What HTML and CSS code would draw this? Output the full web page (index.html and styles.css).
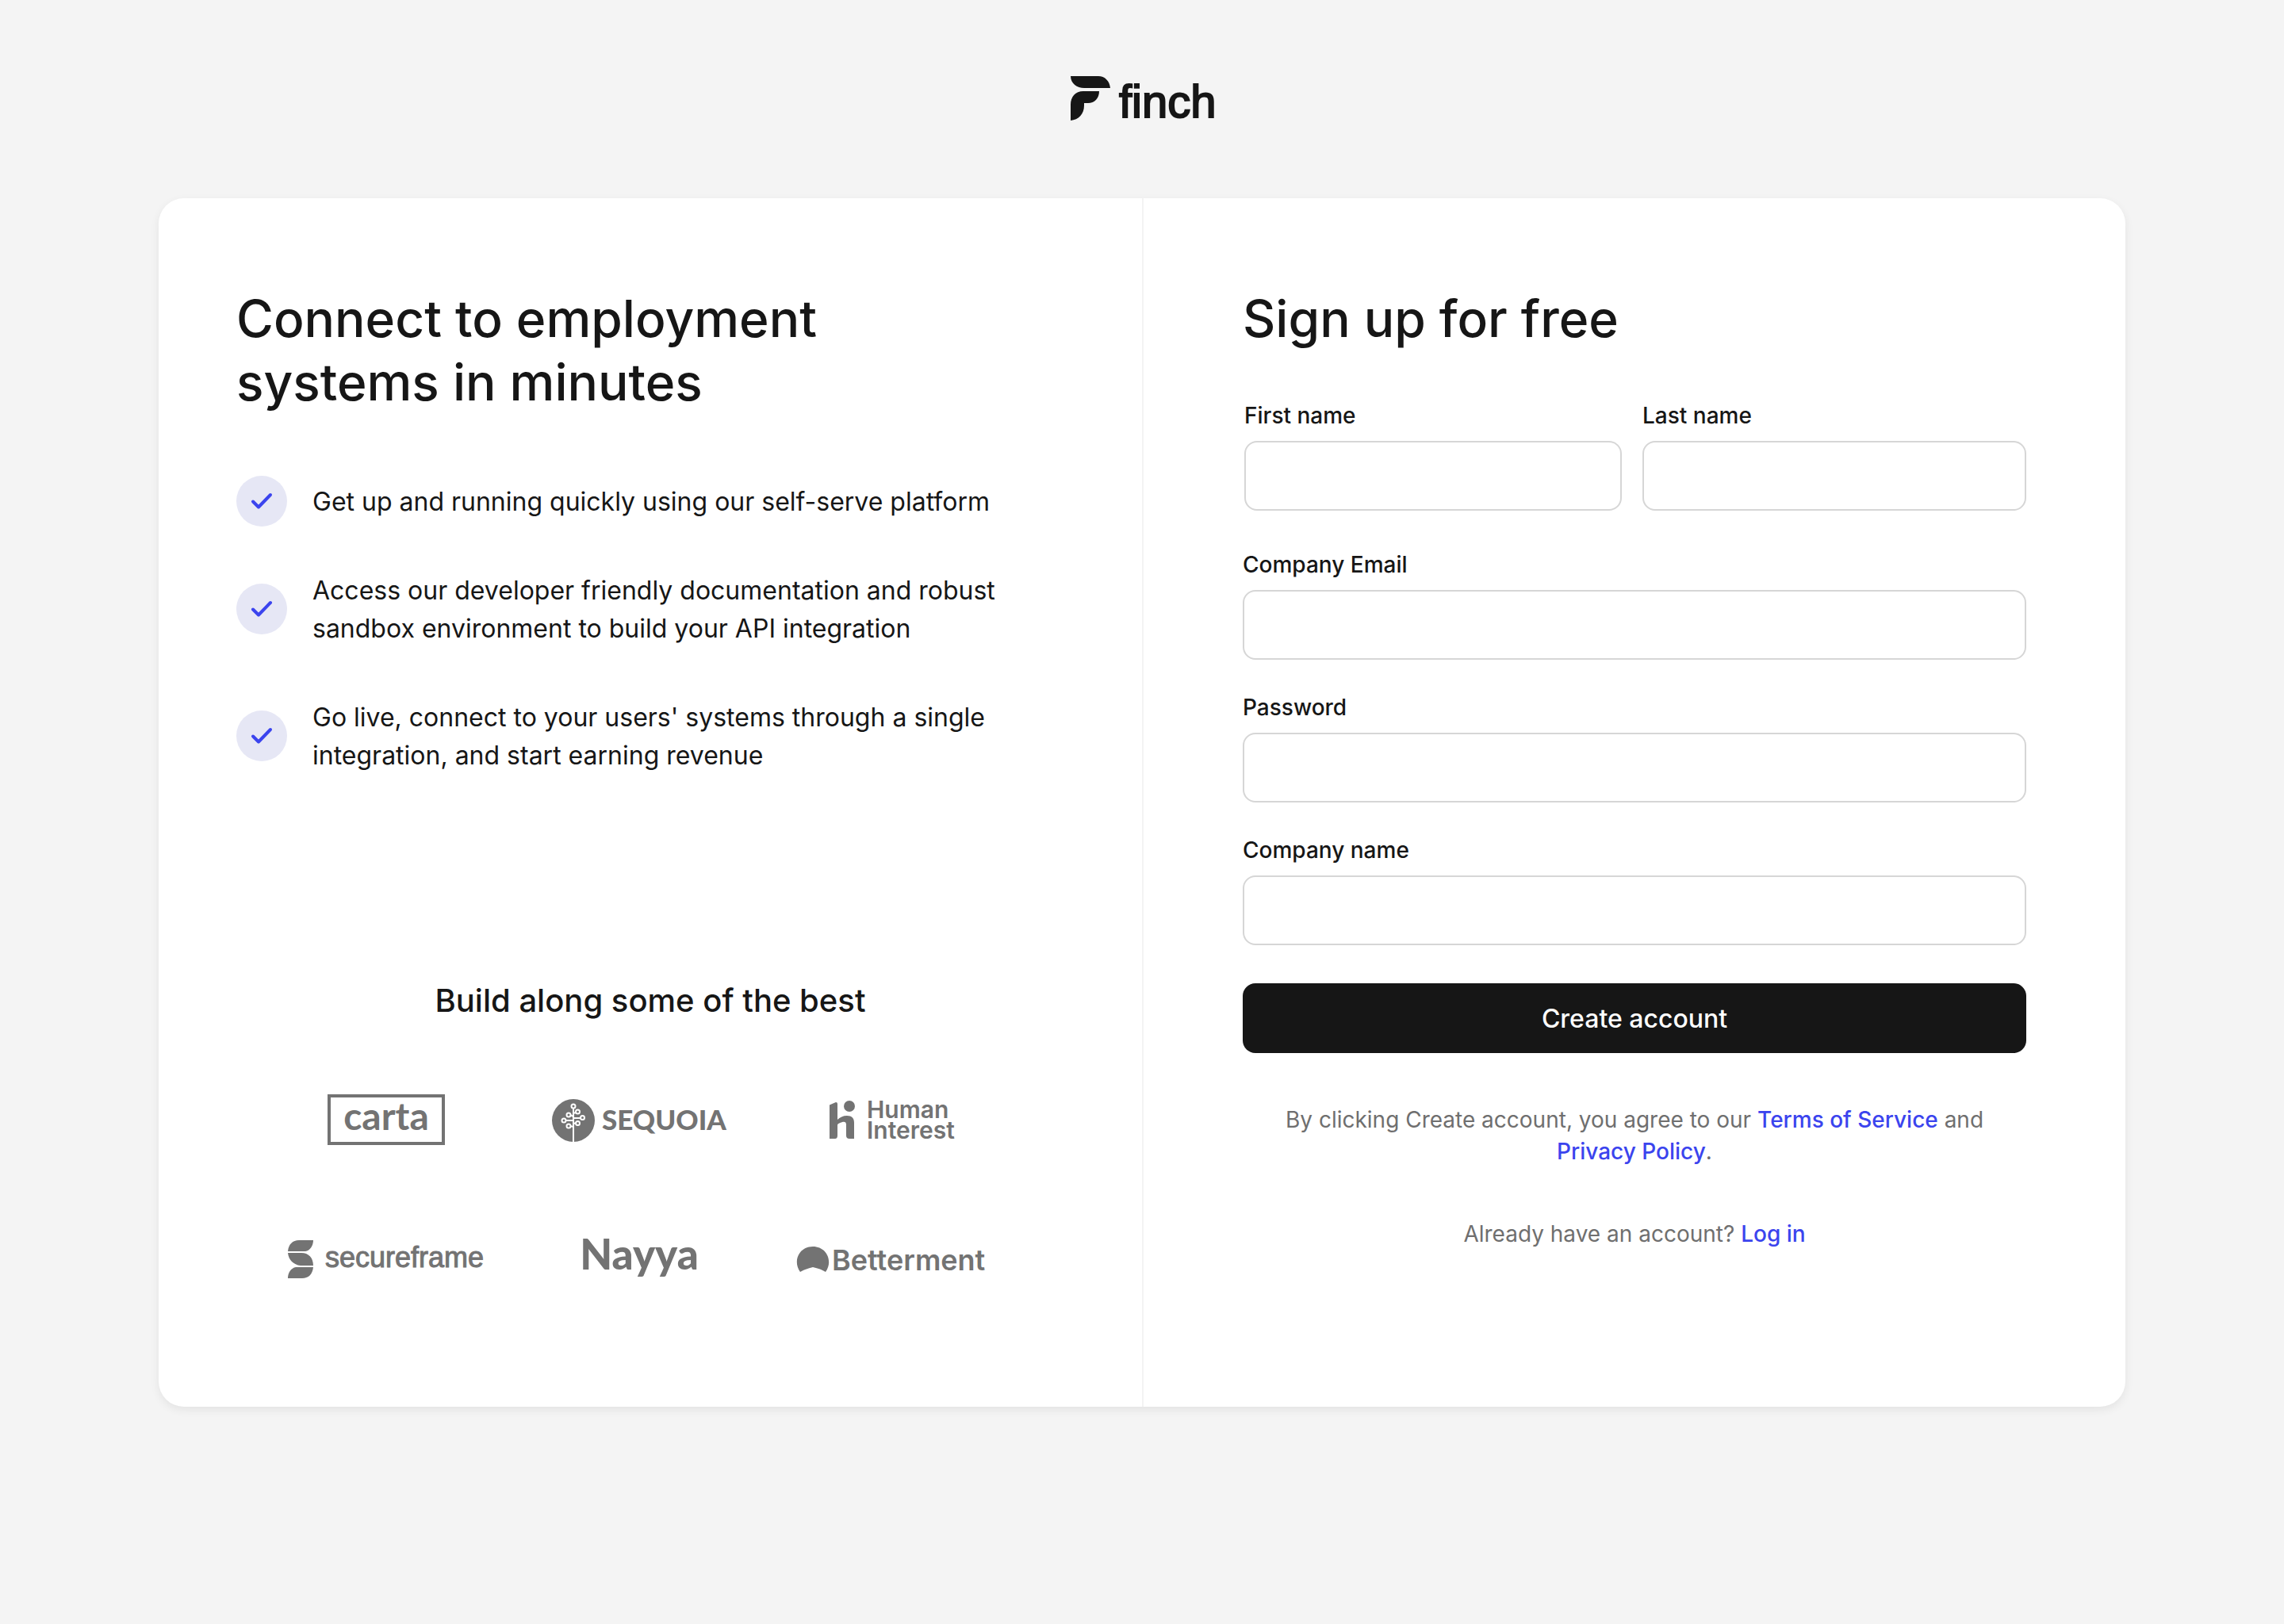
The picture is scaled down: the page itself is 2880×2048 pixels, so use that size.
FILE: index.html
```html
<!DOCTYPE html>
<html lang="en">
<head>
<meta charset="utf-8">
<meta name="viewport" content="width=device-width, initial-scale=1">
<title>Finch – Sign up</title>
<link rel="stylesheet" href="styles.css">
</head>
<body>
<div class="page">
  <header class="brand">
    <svg class="brand-logo" width="180" height="56" viewBox="0 0 180 56" role="img" aria-label="finch">
      <path d="M0 0H35C43 0 49 6 50 15H17C8 15 0 9 0 0Z"/>
      <path d="M0 56V36C0 26 6 19 16 19H36C36 28 30 34 22 34H17V37C17 48 10 55 0 56Z"/>
      <text class="brand-name" x="61" y="52">finch</text>
    </svg>
  </header>

  <main class="card">
    <section class="pitch">
      <h1 class="title">Connect to employment<br>systems in minutes</h1>
      <ul class="benefits">
        <li class="benefit">
          <span class="tick"><svg width="28" height="22" viewBox="0 0 28 22" aria-hidden="true"><path d="M3 11.5L10 18.500L25 3"/></svg></span>
          <span class="benefit-text">Get up and running quickly using our self-serve platform</span>
        </li>
        <li class="benefit">
          <span class="tick"><svg width="28" height="22" viewBox="0 0 28 22" aria-hidden="true"><path d="M3 11.5L10 18.500L25 3"/></svg></span>
          <span class="benefit-text">Access our developer friendly documentation and robust<br>sandbox environment to build your API integration</span>
        </li>
        <li class="benefit">
          <span class="tick"><svg width="28" height="22" viewBox="0 0 28 22" aria-hidden="true"><path d="M3 11.5L10 18.500L25 3"/></svg></span>
          <span class="benefit-text">Go live, connect to your users' systems through a single<br>integration, and start earning revenue</span>
        </li>
      </ul>
      <h2 class="subtitle">Build along some of the best</h2>
      <ul class="logos">
        <li><svg width="148" height="64" viewBox="0 0 148 64" role="img" aria-label="carta">
          <rect class="frame" x="2" y="2" width="144" height="60"/>
          <text class="carta" x="74" y="45" text-anchor="middle">carta</text>
        </svg></li>
        <li><svg width="220" height="64" viewBox="0 0 220 64" role="img" aria-label="Sequoia">
          <circle cx="27" cy="33" r="27"/>
          <g class="tree">
            <path d="M27 18V60M27 30H36M27 33H18M27 37L31 36M27 41L23 40M27 24L30 23M27 28L23 26"/>
            <circle cx="27" cy="15" r="2.500"/><circle cx="32.500" cy="22" r="2.500"/><circle cx="21" cy="26" r="2.500"/><circle cx="38.500" cy="29.500" r="2.500"/><circle cx="15" cy="33" r="2.500"/><circle cx="32.500" cy="36.500" r="2.500"/><circle cx="21" cy="40" r="2.500"/>
          </g>
          <text class="sequoia" x="63" y="45">SEQUOIA</text>
        </svg></li>
        <li><svg width="158" height="64" viewBox="0 0 158 64" role="img" aria-label="Human Interest">
          <path d="M0 14Q0 13 1 13L8 10Q10 10 10 12V32C13 29 17 27 22 27C28 27 31 30 31 36V56H25Q21 56 21 52V38C21 35 19 34 16 35C13 36 10 37 10 39V52Q10 56 7 56H0Z"/>
          <circle cx="25" cy="15" r="7"/>
          <text class="human"><tspan x="47" y="30">Human</tspan><tspan x="47" y="56">Interest</tspan></text>
        </svg></li>
        <li><svg width="248" height="64" viewBox="0 0 248 64" role="img" aria-label="secureframe">
          <path d="M32 8C32 15 28 21 22 22H0C1 13 6 8 14 8ZM0 24H17C26 24 32 30 32 40H16C7 39 1 33 0 24ZM32 42C31 51 26 56 18 56H0C0 49 4 43 10 42Z"/>
          <text class="secureframe" x="47" y="42">secureframe</text>
        </svg></li>
        <li><svg width="148" height="64" viewBox="0 0 148 64" role="img" aria-label="Nayya">
          <text class="nayya" x="74" y="45" text-anchor="middle">Nayya</text>
        </svg></li>
        <li><svg width="240" height="64" viewBox="0 0 240 64" role="img" aria-label="Betterment">
          <path d="M4 48C-6 34 3 16 20 16C37 16 46 34 36 48Q30 44 20 42Q11 44 4 48Z"/>
          <text class="betterment" x="44" y="46">Betterment</text>
        </svg></li>
      </ul>
    </section>

    <section class="signup">
      <h2 class="title">Sign up for free</h2>
      <form class="form">
        <div class="names">
          <div class="field"><label for="first">First name</label><input id="first" type="text"></div>
          <div class="field"><label for="last">Last name</label><input id="last" type="text"></div>
        </div>
        <div class="fields">
          <div class="field"><label for="email">Company Email</label><input id="email" type="email"></div>
          <div class="field"><label for="password">Password</label><input id="password" type="password"></div>
          <div class="field"><label for="company">Company name</label><input id="company" type="text"></div>
        </div>
        <button class="submit" type="submit">Create account</button>
      </form>
      <p class="note">By clicking Create account, you agree to our <a href="#terms">Terms of Service</a> and <a href="#privacy">Privacy Policy</a>.</p>
      <p class="note">Already have an account? <a href="#login">Log in</a></p>
    </section>
  </main>
</div>
</body>
</html>
```
FILE: styles.css
```css
* {
  box-sizing: border-box;
}

body {
  margin: 0;
  background: #f4f4f4;
  color: #161616;
  font-family: Inter, "Liberation Sans", sans-serif;
}

h1, h2, p, ul {
  margin: 0;
  padding: 0;
}

ul {
  list-style: none;
}

svg {
  display: block;
  overflow: visible;
}

.page {
  padding: 96px 200px;
}

.brand {
  display: flex;
  justify-content: center;
  margin-bottom: 98px;
}

.brand-logo {
  fill: #161616;
}

.brand-name {
  font: 400 58px "Liberation Sans", sans-serif;
  stroke: #161616;
  stroke-width: 2px;
}

.card {
  display: grid;
  grid-template-columns: 1fr 1fr;
  max-width: 2480px;
  margin: 0 auto;
  background: #fff;
  border-radius: 32px;
  box-shadow: 0 4px 12px rgba(0, 0, 0, 0.07);
}

.pitch {
  padding: 112px 98px 154px;
}

.signup {
  padding: 112px 125px 198px;
  border-left: 2px solid #f3f3f3;
}

.title {
  font-size: 64px;
  font-weight: 500;
  line-height: 80px;
}

.benefits {
  display: flex;
  flex-direction: column;
  gap: 62px;
  margin-top: 85px;
}

.benefit {
  display: flex;
  align-items: center;
  gap: 32px;
  font-size: 32px;
  line-height: 48px;
}

.benefit-text {
  padding-top: 2px;
}

.tick {
  display: flex;
  flex: none;
  align-items: center;
  justify-content: center;
  width: 64px;
  height: 64px;
  margin: -8px 0;
  border-radius: 50%;
  background: #e6e7f5;
}

.tick path {
  fill: none;
  stroke: #3b44ee;
  stroke-width: 4px;
  stroke-linecap: round;
  stroke-linejoin: round;
}

.subtitle {
  margin-top: 261px;
  font-size: 40px;
  font-weight: 500;
  line-height: 48px;
  text-align: center;
}

.logos {
  display: grid;
  grid-template-columns: repeat(3, 1fr);
  row-gap: 112px;
  margin: 94px 58px 0 30px;
  fill: #737373;
}

.logos li {
  display: flex;
  justify-content: center;
}

.frame {
  fill: none;
  stroke: #737373;
  stroke-width: 4px;
}

.tree {
  fill: none;
  stroke: #fff;
  stroke-width: 2px;
}

.carta {
  font: 700 48px Lato, sans-serif;
}

.sequoia {
  font: 900 35px Lato, sans-serif;
}

.human {
  font: 600 30px Inter, sans-serif;
}

.secureframe {
  font: 400 36px "Liberation Sans", sans-serif;
  stroke: #737373;
  stroke-width: 1px;
}

.nayya {
  font: 900 53px Lato, sans-serif;
}

.betterment {
  font: 600 36px Inter, sans-serif;
}

.form {
  display: flex;
  flex-direction: column;
  gap: 48px;
  margin-top: 62px;
}

.names {
  display: grid;
  grid-template-columns: 476fr 484fr;
  gap: 26px;
  padding-left: 2px;
}

.fields {
  display: flex;
  flex-direction: column;
  gap: 40px;
}

.field {
  display: flex;
  flex-direction: column;
  gap: 12px;
  min-width: 0;
}

.field label {
  font-size: 28px;
  font-weight: 500;
  line-height: 40px;
}

.field input {
  width: 100%;
  height: 88px;
  padding: 0 24px;
  border: 2px solid #d6d6d6;
  border-radius: 16px;
  background: #fff;
  color: inherit;
  font: inherit;
  font-size: 32px;
}

.submit {
  height: 88px;
  border: 0;
  border-radius: 16px;
  background: #161616;
  color: #fff;
  font: 500 32px Inter, sans-serif;
}

.note {
  margin-top: 64px;
  padding: 0 32px;
  color: #6f6f6f;
  font-size: 28px;
  line-height: 40px;
  text-align: center;
}

.note a {
  color: #3b44ee;
  font-weight: 500;
  text-decoration: none;
}
```
